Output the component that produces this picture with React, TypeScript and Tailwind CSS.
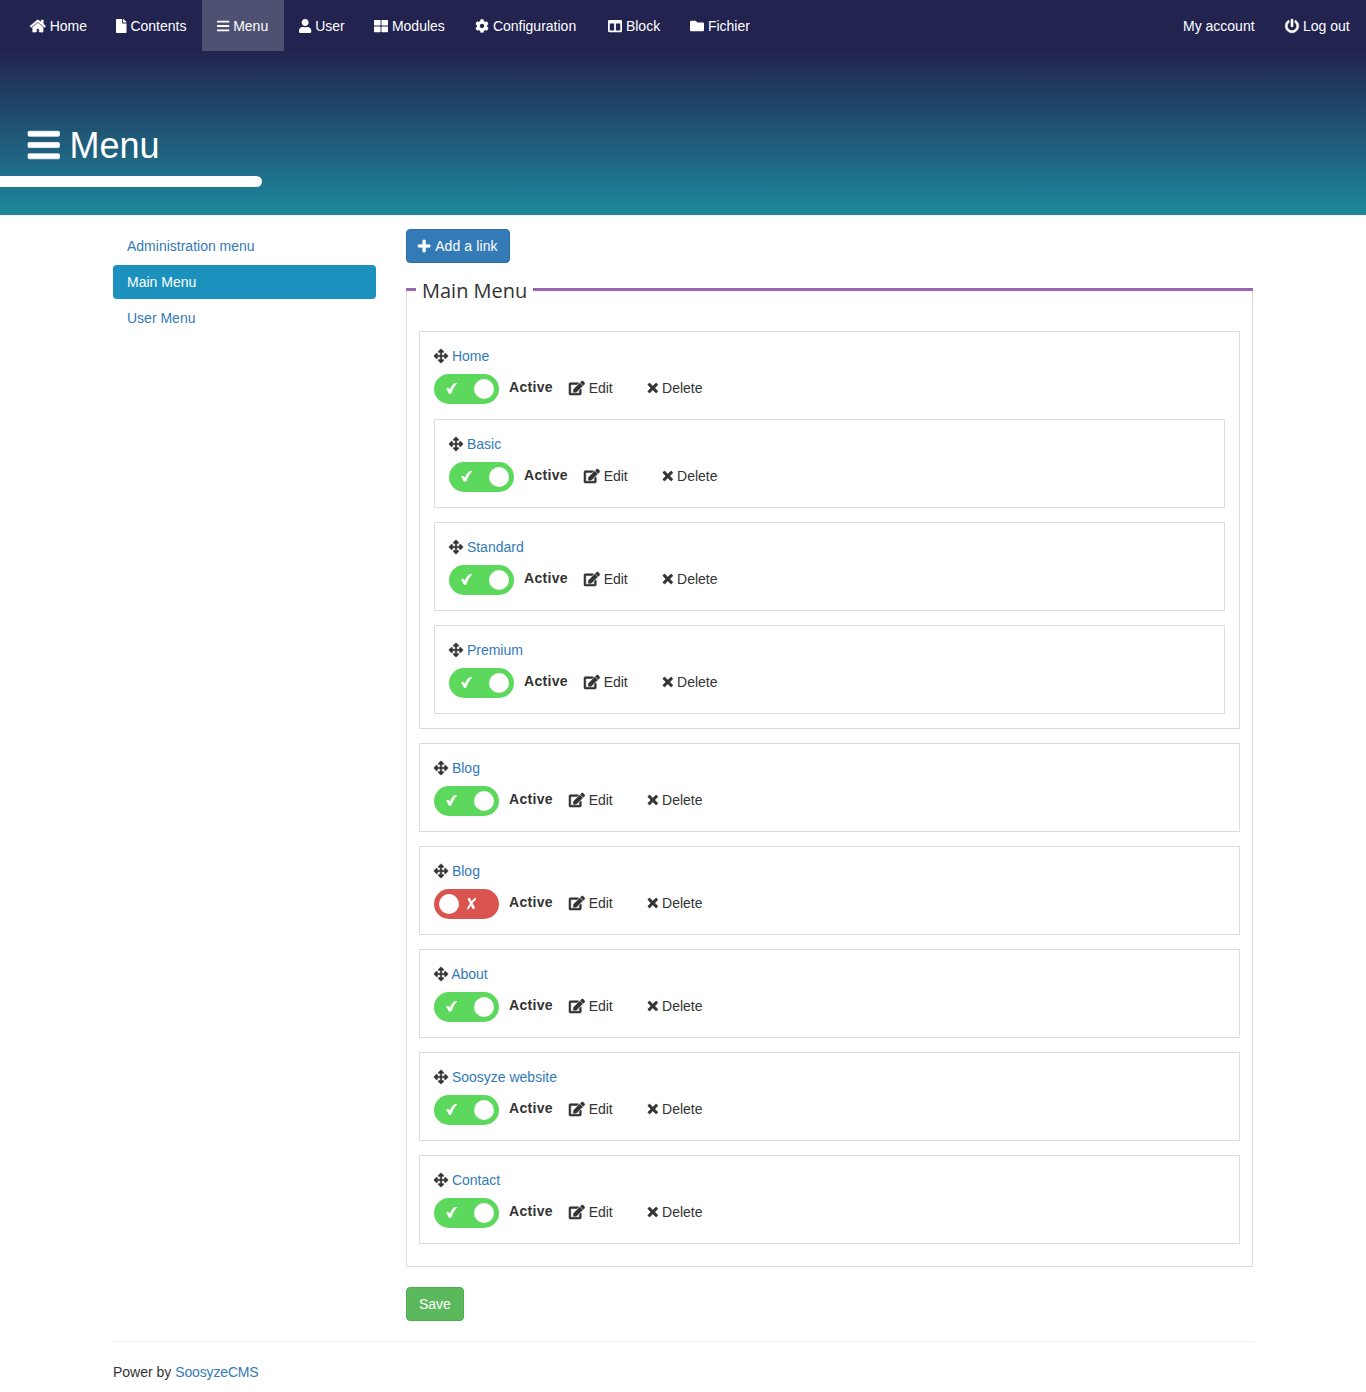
import React from "react";
import type { IconType } from "react-icons";
import {
  FaArrowsAlt,
  FaBars,
  FaCog,
  FaColumns,
  FaEdit,
  FaFile,
  FaFolder,
  FaHome,
  FaPlus,
  FaPowerOff,
  FaThLarge,
  FaTimes,
  FaUser,
} from "react-icons/fa";

type NavEntry = { label: string; icon: IconType; size: string; width: string; active?: boolean };
type MenuEntry = { title: string; off?: boolean; children?: MenuEntry[] };

const nav: NavEntry[] = [
  { label: "Home", icon: FaHome, size: "w-[1.125em] stroke-[16]", width: "w-[86px]" },
  { label: "Contents", icon: FaFile, size: "w-[0.75em]", width: "w-[101px]" },
  { label: "Menu", icon: FaBars, size: "w-[0.875em]", width: "w-[82px]", active: true },
  { label: "User", icon: FaUser, size: "w-[0.875em]", width: "w-[75px]" },
  { label: "Modules", icon: FaThLarge, size: "w-[1em]", width: "w-[101px]" },
  { label: "Configuration", icon: FaCog, size: "w-[1em]", width: "w-[133px]" },
  { label: "Block", icon: FaColumns, size: "w-[1em]", width: "w-[82px]" },
  { label: "Fichier", icon: FaFolder, size: "w-[1em]", width: "w-[91px]" },
];

const entries: MenuEntry[] = [
  { title: "Home", children: [{ title: "Basic" }, { title: "Standard" }, { title: "Premium" }] },
  { title: "Blog" },
  { title: "Blog", off: true },
  { title: "About" },
  { title: "Soosyze website" },
  { title: "Contact" },
];

function Icon({ as: Glyph, size = "w-[1em]" }: { as: IconType; size?: string }) {
  return <Glyph className={`inline-block h-[1em] overflow-visible align-[-0.125em] ${size}`} />;
}

function Toggle({ off }: { off?: boolean }) {
  return off ? (
    <span className="flex h-[30px] w-[65px] items-center rounded-full bg-[#d9534f] pl-[5px]">
      <span className="size-5 rounded-full bg-white" />
      <svg className="ml-[8px] h-3 w-[9px] -translate-y-[0.5px]" viewBox="0 0 9 12" fill="none" stroke="white" strokeLinecap="round">
        <path d="M2 1.6C3.4 3.8 5 7.6 6.6 10.2" strokeWidth="2.6" />
        <path d="M8.2 1.2C5.6 3.6 2.8 7.6 0.9 10.9" strokeWidth="2" />
      </svg>
    </span>
  ) : (
    <span className="flex h-[30px] w-[65px] items-center justify-between rounded-full bg-[#5cd85c] pr-[5px] pl-3">
      <svg className="h-[11px] w-[11px] -translate-y-px" viewBox="0 0 11 11" fill="white" stroke="white" strokeWidth="0.7">
        <path d="M0.4 6C1 5.2 2 5 2.7 5.5C3.3 6 3.6 6.7 3.9 7.4C5 4.4 6.6 1.8 8.4 0.5C9.2 0.2 10.2 0.2 10.9 0.3C8.4 2.8 6.6 6 5.2 9.9C4.8 10.9 3.2 11 2.8 10C2.2 8.5 1.6 6.6 0.4 6Z" />
      </svg>
      <span className="size-5 rounded-full bg-white" />
    </span>
  );
}

function Item({ entry }: { entry: MenuEntry }) {
  return (
    <li className="border border-[#ddd] p-[14px]">
      <div className="h-5">
        <Icon as={FaArrowsAlt} size="w-[1em] stroke-[16]" /> <a href="#" className="text-[#337ab7]">{entry.title}</a>
      </div>
      <div className="mt-2 mb-px flex h-[30px]">
        <Toggle off={entry.off} />
        <span className="ml-[10px] w-[60px] pt-[3px] font-bold tracking-[0.3px]">Active</span>
        <a href="#" className="w-[79px] pt-1">
          <Icon as={FaEdit} size="w-[1.125em] stroke-[20]" /> Edit
        </a>
        <a href="#" className="pt-1">
          <Icon as={FaTimes} size="mr-[0.5px] w-[0.6875em] stroke-[24]" /> Delete
        </a>
      </div>
      {entry.children && (
        <ul className="mt-[15px] flex flex-col gap-[14px]">
          {entry.children.map((c) => (
            <Item key={c.title} entry={c} />
          ))}
        </ul>
      )}
    </li>
  );
}

export default function App() {
  return (
    <div className="min-h-[1392px] bg-white font-['Liberation_Sans',Arial,sans-serif] text-sm leading-5 text-[#333]">
      <header className="h-[215px] bg-[linear-gradient(to_bottom,#22244f_51px,#1d889d)] text-white">
        <nav className="flex h-[51px] justify-between pl-[15px]">
          <ul className="flex">
            {nav.map((n) => (
              <li key={n.label} className={`whitespace-nowrap ${n.width}`}>
                <a href="#" className={n.active ? "block h-full bg-[#4f5173] pt-4 pl-[15px]" : "block h-full pt-4 pl-[15px]"}>
                  <Icon as={n.icon} size={n.size} /> {n.label}
                </a>
              </li>
            ))}
          </ul>
          <ul className="flex whitespace-nowrap">
            <li className="w-[102px]"><a href="#" className="block pt-4 pl-[15px]">My account</a></li>
            <li className="w-24">
              <a href="#" className="block pt-4 pl-[15px]">
                <Icon as={FaPowerOff} size="w-[1em] stroke-[16]" /> Log out
              </a>
            </li>
          </ul>
        </nav>
        <h1 className="mt-[75px] ml-7 h-10 text-4xl leading-10 font-normal">
          <Icon as={FaBars} size="w-[0.875em] stroke-[10]" /> Menu
        </h1>
        <div className="mt-[10px] h-[11px] w-[262px] rounded-r-full bg-white" />
      </header>

      <div className="mx-auto w-[1140px]">
        <div className="flex gap-[30px] pt-[14px]">
          <aside className="w-[263px]">
            <ul className="flex flex-col gap-[2px] *:h-[34px] *:px-[14px] *:py-[7px]">
              <li><a href="#" className="text-[#337ab7]">Administration menu</a></li>
              <li className="rounded bg-[#1c91bd] text-white"><a href="#">Main Menu</a></li>
              <li><a href="#" className="text-[#337ab7]">User Menu</a></li>
            </ul>
          </aside>
          <main className="w-[847px]">
            <a href="#" className="block h-[34px] w-[104px] rounded border border-[#2e6da4] bg-[#337ab7] px-[11px] py-1.5 whitespace-nowrap text-white">
              <Icon as={FaPlus} size="mr-px w-[0.875em] stroke-[24]" /> <span className="tracking-[0.1px]">Add a link</span>
            </a>
            <section className="mt-[11px]">
              <div className="flex h-[31px] items-center">
                <span className="h-[3px] w-[10px] bg-[#9966b0]" />
                <h2 className="px-1.5 pt-[3px] font-['Open_Sans',sans-serif] text-xl leading-7">Main Menu</h2>
                <span className="h-[3px] flex-1 bg-[#9966b0]" />
              </div>
              <ul className="-mt-[14px] flex flex-col gap-[14px] border-x border-b border-[#ddd] px-3 pt-10 pb-[22px]">
                {entries.map((e, i) => (
                  <Item key={i} entry={e} />
                ))}
              </ul>
            </section>
            <button className="mt-5 block h-[34px] rounded border border-[#4cae4c] bg-[#5cb85c] px-3 text-white">Save</button>
          </main>
        </div>
        <footer className="mt-5 border-t border-[#eee] pt-5">
          Power by <a href="#" className="tracking-[-0.15px] text-[#337ab7]">SoosyzeCMS</a>
        </footer>
      </div>
    </div>
  );
}
